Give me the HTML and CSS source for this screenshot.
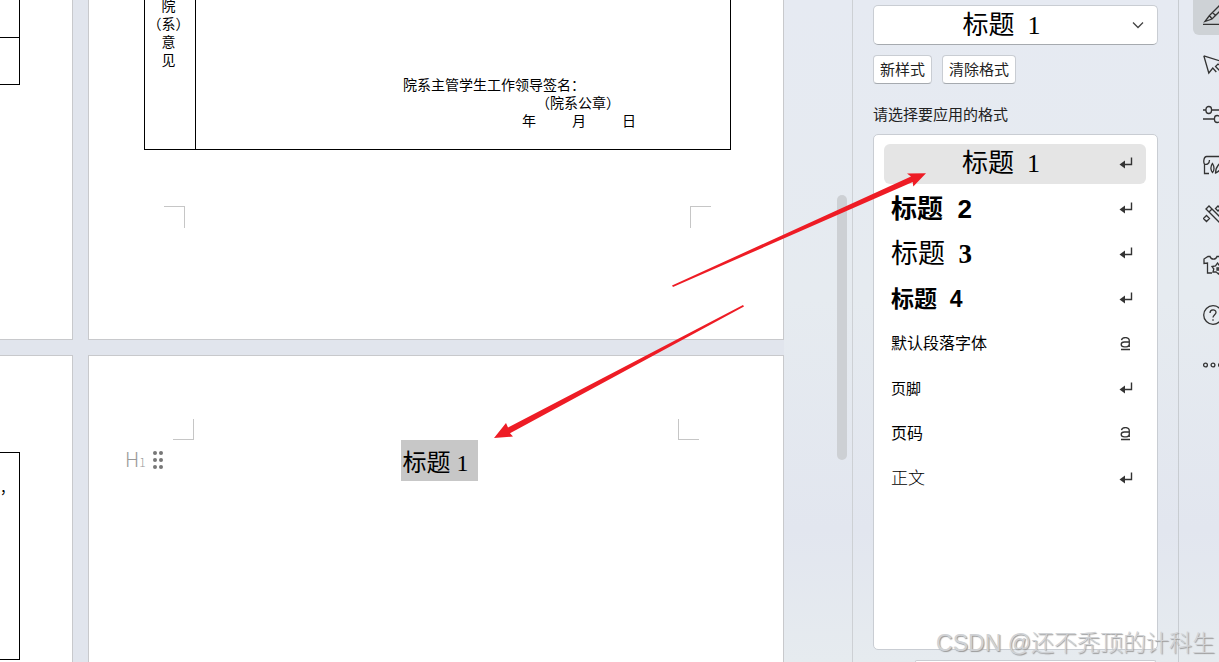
FILE: index.html
```html
<!DOCTYPE html>
<html lang="zh-CN">
<head>
<meta charset="utf-8">
<title>样式和格式</title>
<link rel="stylesheet" href="styles.css">
</head>
<body>
<svg class="defs" aria-hidden="true">
  <symbol id="para" viewBox="0 0 14 14"><path d="M12.500 .5V7.500H5" fill="none" stroke="#333" stroke-width="1.400"/><path d="M.5 7.500 6 3.500v8z" fill="#333"/></symbol>
  <symbol id="char" viewBox="0 0 14 14"><path d="M2.500 3.200Q3 .6 6.500 .6q3.800 0 3.800 3.300v6M10.300 5H5.300Q2.200 5 2.200 7.400t3.100 2.400h2Q10.300 9.800 10.300 7M2 12.500h9" fill="none" stroke="#333" stroke-width="1.300"/></symbol>
</svg>
<div class="app">
  <main class="workspace">
    <div class="sheets">
      <section class="sheet sheet-edge-top">
        <div class="frame frame-a"></div>
        <div class="frame frame-b"></div>
      </section>
      <section class="sheet sheet-form">
        <table class="form">
          <tr>
            <th class="form-label">院<br>（系）<br>意<br>见</th>
            <td class="form-body">
              <p>院系主管学生工作领导签名：</p>
              <p class="seal">（院系公章）</p>
              <p class="date"><span>年</span><span>月</span><span>日</span></p>
            </td>
          </tr>
        </table>
        <div class="marks marks-bottom"><i class="mark tr"></i><i class="mark tl"></i></div>
      </section>
      <section class="sheet sheet-edge-bottom">
        <div class="frame frame-c">，</div>
      </section>
      <section class="sheet sheet-title">
        <div class="marks marks-top"><i class="mark br"></i><i class="mark bl"></i></div>
        <div class="title-row">
          <button class="handle" aria-label="标题级别 1">
            <span class="level">H<small>1</small></span>
            <svg width="12" height="18" viewBox="0 0 12 18" fill="#777"><circle cx="3" cy="2" r="2"/><circle cx="9" cy="2" r="2"/><circle cx="3" cy="9" r="2"/><circle cx="9" cy="9" r="2"/><circle cx="3" cy="16" r="2"/><circle cx="9" cy="16" r="2"/></svg>
          </button>
          <h1 class="title">标题 1</h1>
        </div>
      </section>
    </div>
    <div class="scroll"><div class="thumb"></div></div>
  </main>

  <aside class="panel">
    <div class="picker">
      <select class="current" aria-label="当前样式"><option>标题&nbsp; 1</option></select>
      <svg class="chevron" width="12" height="8" viewBox="0 0 12 8"><path d="m1 1.500 5 5 5-5" fill="none" stroke="#444" stroke-width="1.300"/></svg>
    </div>
    <div class="actions"><button>新样式</button><button>清除格式</button></div>
    <p class="hint">请选择要应用的格式</p>
    <div class="styles">
      <button class="style active"><span class="name hand">标题  1</span><svg><use href="#para"/></svg></button>
      <button class="style"><span class="name h2">标题  2</span><svg><use href="#para"/></svg></button>
      <button class="style"><span class="name h3">标题  <b>3</b></span><svg><use href="#para"/></svg></button>
      <button class="style"><span class="name h4">标题  4</span><svg><use href="#para"/></svg></button>
      <button class="style"><span class="name body">默认段落字体</span><svg><use href="#char"/></svg></button>
      <button class="style"><span class="name small">页脚</span><svg><use href="#para"/></svg></button>
      <button class="style"><span class="name body">页码</span><svg><use href="#char"/></svg></button>
      <button class="style"><span class="name text">正文</span><svg><use href="#para"/></svg></button>
    </div>
    <div class="filter"></div>
  </aside>

  <nav class="rail">
    <button class="on" aria-label="样式"><svg viewBox="0 0 20 20"><path d="M0 19.300h20M2 16.500l4.500-6L17 0l3 3L9 14zM6.500 10.500 9 14M9.500 7.500l3 3M2 16.500l7-2.500"/></svg></button>
    <button aria-label="选择"><svg viewBox="0 0 20 20"><path d="M.8.800 19 6.500l-3 1.500M.8.800 5.800 18l4-5 3.500 4M19 12l-4-3-2.500 2.500 4 4"/></svg></button>
    <button aria-label="属性"><svg viewBox="0 0 20 20"><path d="M0 5h3m6 0h11M0 14h11m6 0h3"/><rect x="3" y="1.500" width="5.500" height="7" rx="2.700"/><rect x="11.500" y="10.500" width="5.500" height="7" rx="2.700"/></svg></button>
    <button aria-label="素材"><svg viewBox="0 0 20 20"><path d="M6 18.500H1.500V9M1.500 9C.2 7.500.7 1.500 3.500 1.500H20M1.500 9c2 1 5 0 5-4M9.500 8.500c-3 4-1 8 0 9 2-2 2-6 0-9zM12.500 18c0-5 2-8 6-11 0 6-2 10-6 11z"/></svg></button>
    <button aria-label="美化"><svg viewBox="0 0 20 20"><path d="m3 4 3-3 13 13-3 3zM6 7l3-3M3.500 10.500l3 3-3 3-3-3zM15 1l2.500 2.500L15 6l-2.500-2.500z"/></svg></button>
    <button aria-label="主题"><svg viewBox="0 0 20 20"><path d="M9 18H4.500V8L1 8.500V4l4-2.500h2c1 3.500 6 3.500 7 0h2l3.500 2.500v4M14.500 8l1.700 2.300 2.800-.3-.5 3 1.500 2-2.500 1.200L15.500 19 13 16.800l-3 .2.800-3L9 11.500l3.500-.7zM14 13h2v2h-2z"/></svg></button>
    <button aria-label="帮助"><svg viewBox="0 0 20 20"><circle cx="10" cy="10" r="9.300"/><path d="M7 8c0-4 6-4 6-.5 0 2-3 2.500-3 5M10 14.300v1.500"/></svg></button>
    <button aria-label="更多"><svg viewBox="0 0 20 20"><circle cx="2.500" cy="10" r="1.900"/><circle cx="10" cy="10" r="1.900"/><circle cx="17.500" cy="10" r="1.900"/></svg></button>
  </nav>
</div>
<svg class="arrows" width="1219" height="662" viewBox="0 0 1219 662" fill="#ee1c25" aria-hidden="true">
  <path d="M672 285.500 911 176.500l-4-3 19-.3-12.700 13.300-.6-4.500L673 287z"/>
  <path d="M743 305 508 427.500l-2-4.500-12 15 19-1.500-3-3.200L744 306.500z"/>
</svg>
<div class="watermark">CSDN @还不秃顶的计科生</div>
</body>
</html>
```
FILE: styles.css
```css
* { box-sizing: border-box; }
body {
  margin: 0;
  overflow: hidden;
  color: #000;
  font-family: "Liberation Sans", "Noto Sans CJK SC", sans-serif;
}
p { margin: 0; }
button { font: inherit; color: inherit; border: 0; background: none; padding: 0; }
.defs { position: absolute; width: 0; height: 0; }

.app {
  display: flex;
  height: 100vh;
  background: linear-gradient(180deg, #e6eaf2 0%, #e6ebf0 45%, #e2e6ef 80%, #e6ebef 100%);
}

/* Document pages */
.workspace { display: flex; flex: 1; min-width: 0; overflow: hidden; border-right: 1px solid #cdd0d4; }
.sheets {
  flex: 1;
  min-width: 0;
  display: grid;
  grid-template-columns: 73px minmax(0, 1fr);
  grid-template-rows: 340px minmax(0, 1fr);
  gap: 15px;
  background: #e1e5ed;
}
.sheet { background: #fff; border: 1px solid #c8c9cc; min-width: 0; overflow: hidden; }
.sheet-edge-top, .sheet-edge-bottom { border-left: 0; }
.sheet-edge-top, .sheet-form { border-top: 0; }
.sheet-title, .sheet-edge-bottom { border-bottom: 0; }

.frame { width: 20px; border: 1px solid #000; border-left: 0; }
.frame-a { height: 38px; border-top: 0; }
.frame-b { height: 47px; border-top: 0; }
.frame-c { height: 208px; margin-top: 96px; padding-top: 24px; font: 14px/20px "Noto Sans CJK SC", sans-serif; }

.form {
  width: calc(100% - 107px);
  height: 156px;
  margin: -6px 52px 0 55px;
  border-collapse: collapse;
  font: 14px/18px "Noto Sans CJK SC", sans-serif;
}
.form th, .form td { border: 1px solid #000; padding: 0; font-weight: 400; vertical-align: top; }
.form .form-label { width: 51px; padding: 1px 3px 0 0; white-space: nowrap; }
.form .form-body { padding: 80px 0 0 207px; }
.seal { padding-left: 133px; }
.date { display: flex; gap: 36px; padding-left: 119px; }

.marks { display: flex; justify-content: space-between; }
.marks-bottom { margin: 56px 72px 0 75px; }
.marks-top { margin: 63px 84px 0 84px; }
.mark { width: 21px; height: 22px; border: 0 solid #c6c6c6; }
.marks-top .mark { height: 21px; }
.tr { border-width: 1px 1px 0 0; }
.tl { border-width: 1px 0 0 1px; }
.br { border-width: 0 1px 1px 0; }
.bl { border-width: 0 0 1px 1px; }

.title-row { display: grid; grid-template-columns: 1fr auto 1fr; padding-left: 6px; }
.handle { display: flex; gap: 6px; align-items: center; justify-self: start; height: 40px; margin-left: 30px; }
.level { font: 300 20px/20px "Noto Sans CJK SC", sans-serif; color: #999; }
.level small { font-size: 12px; }
.title {
  margin: 0;
  padding: 6px 9px 0 2px;
  background: #c7c7c7;
  font: 400 24px/35px "Liberation Serif", "Noto Sans CJK SC", serif;
}

.scroll { width: 68px; padding: 195px 5px 0 53px; }
.thumb { width: 10px; height: 265px; border-radius: 5px; background: #cdd0d4; }

/* Style panel */
.panel { width: 326px; flex: none; display: flex; flex-direction: column; padding: 5px 20px 0; border-right: 1px solid #c8ccd1; }
.picker { display: grid; align-items: center; }
.picker > * { grid-area: 1 / 1; }
.current {
  appearance: none;
  width: 100%;
  height: 40px;
  padding: 0 28px 0 0;
  border: 1px solid #c9cdd3;
  border-bottom-color: #a6aaaf;
  border-radius: 5px;
  background: #fff;
  color: #000;
  font: 26px "Liberation Serif", "Noto Sans CJK SC", serif;
  text-align: center;
  text-align-last: center;
}
.chevron { justify-self: end; margin-right: 14px; pointer-events: none; }
.actions { display: flex; gap: 10px; margin-top: 10px; }
.actions button {
  height: 29px;
  padding: 0 6px;
  border: 1px solid #c9cdd3;
  border-bottom-color: #a6aaaf;
  border-radius: 4px;
  background: #fff;
  font-size: 15px;
  line-height: 20px;
  color: #222;
}
.hint { margin-top: 21px; font-size: 15px; line-height: 20px; color: #222; }
.styles {
  flex: 1;
  min-height: 0;
  margin-top: 9px;
  padding: 9px 11px 9px 10px;
  display: flex;
  flex-direction: column;
  gap: 5px;
  border: 1px solid #c9cdd3;
  border-radius: 5px;
  background: #fff;
}
.style { display: flex; align-items: center; height: 40px; padding: 0 13px 0 7px; border-radius: 6px; text-align: left; }
.style svg { width: 14px; height: 14px; flex: none; }
.active { background: #e5e5e5; }
.name { flex: 1; white-space: pre; line-height: 38px; }
.hand { padding-right: 8px; font-family: "Liberation Serif", "Noto Sans CJK SC", serif; font-size: 26px; text-align: center; }
.h2 { font-size: 26px; font-weight: 700; }
.h3 { font-size: 27px; font-family: "Liberation Serif", "Noto Sans CJK SC", serif; }
.h4 { font-size: 23px; font-weight: 700; }
.body { font-size: 16px; }
.small { font-size: 15px; }
.text { font-size: 17px; font-weight: 300; }
.filter { height: 2px; margin: 10px 2px 0 42px; border: 1px solid #c9cdd3; border-bottom: 0; border-radius: 4px 4px 0 0; background: #fff; }

/* Tool rail */
.rail { width: 40px; flex: none; overflow: hidden; display: flex; flex-direction: column; gap: 10px; padding-left: 14px; }
.rail button { width: 40px; height: 40px; flex: none; display: grid; place-items: center; border-radius: 6px; }
.rail button:first-child { margin-top: -5px; }
.rail .on { background: #ced2d6; }
.rail svg { width: 20px; height: 20px; fill: none; stroke: #333; stroke-width: 1.300; }

/* Annotations over the window */
.arrows { position: absolute; left: 0; top: 0; pointer-events: none; }
.watermark {
  position: absolute;
  right: 4px;
  bottom: 2px;
  font: 300 23px/34px "Liberation Sans", "Noto Sans CJK SC", sans-serif;
  color: #d0d2d5;
  text-shadow: 1px 1px 1px #999;
}
```
